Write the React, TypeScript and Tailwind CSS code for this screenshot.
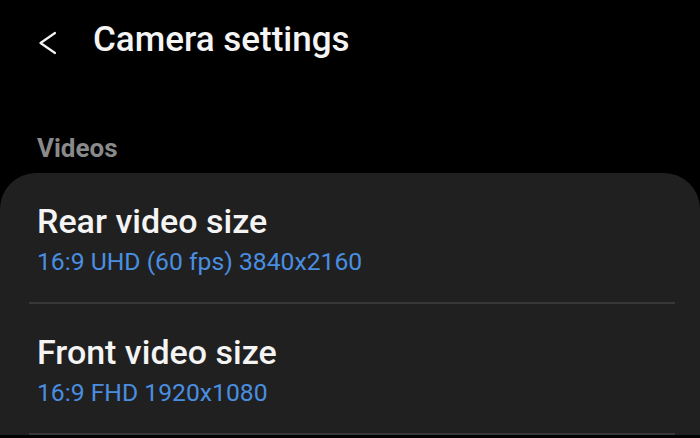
import React from 'react';

type SettingItem = {
  title: string;
  value: string;
};

const videoSettings: SettingItem[] = [
  { title: 'Rear video size', value: '16:9 UHD (60 fps) 3840x2160' },
  { title: 'Front video size', value: '16:9 FHD 1920x1080' },
];

const BackIcon: React.FC = () => (
  <svg className="mt-[12px] shrink-0" width="18" height="26" viewBox="0 0 18 26" fill="none" aria-hidden="true">
    <path d="M17 3L2.5 13 17 23" stroke="#f2f2f2" strokeWidth="2.2" strokeLinecap="round" strokeLinejoin="round" />
  </svg>
);

const SettingRow: React.FC<{ item: SettingItem }> = ({ item }) => (
  <div className="pl-[37px] pr-[25px]">
    <div className="h-[129px] pt-[28px]">
      <div className="text-[34px] leading-[40px] font-medium text-[#f4f4f4]">{item.title}</div>
      <div className="mt-[6px] text-[24.7px] leading-[30px] text-[#4a8ee0]">{item.value}</div>
    </div>
    <div className="h-[2px] -ml-[8px] bg-[#383838]" />
  </div>
);

const App: React.FC = () => {
  return (
    <div className="w-[700px] h-[438px] overflow-hidden bg-black font-['Roboto',sans-serif]">
      <div className="flex items-start pt-[18px] pl-[38px]">
        <BackIcon />
        <h1 className="ml-[37px] text-[35px] leading-[44px] font-medium text-[#f4f4f4]">Camera settings</h1>
      </div>
      <div className="h-[111px] pl-[37px] pt-[70px]">
        <span className="block text-[26px] leading-[32px] font-bold text-[#8a8a8a]">Videos</span>
      </div>
      <div className="bg-[#202020] rounded-t-[36px]">
        {videoSettings.map((item) => (
          <SettingRow key={item.title} item={item} />
        ))}
      </div>
    </div>
  );
};

export default App;
